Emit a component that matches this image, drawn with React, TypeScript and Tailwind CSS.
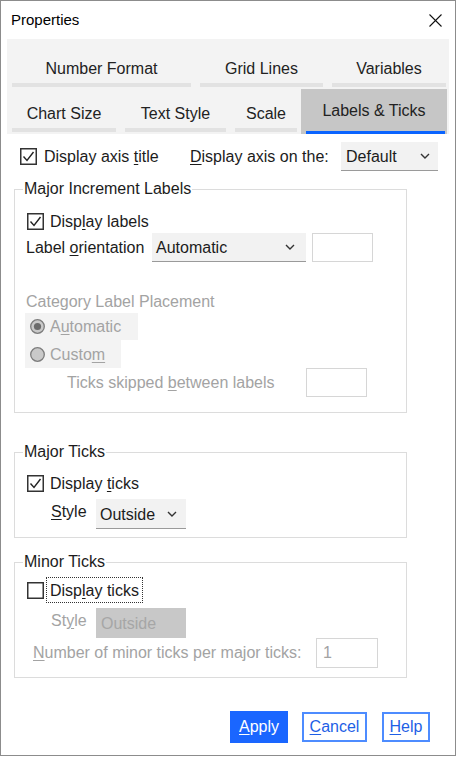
import type { ReactNode } from 'react'

const font = { fontFamily: '"Liberation Sans", Arial, sans-serif' }

function CheckBox({ checked }: { checked: boolean }) {
  return (
    <svg width="17" height="17" viewBox="0 0 17 17" className="shrink-0">
      <rect x="0.75" y="0.75" width="15.5" height="15.5" fill="white" stroke="#333" strokeWidth="1.5" />
      {checked && <polyline points="3.5,8.5 7,12.5 13.5,4" fill="none" stroke="#222" strokeWidth="1.4" />}
    </svg>
  )
}

function Radio({ selected }: { selected: boolean }) {
  return (
    <svg width="15" height="15" viewBox="0 0 15 15" className="shrink-0">
      <circle cx="7.5" cy="7.5" r="6.8" fill="#c9c9c9" stroke="#7c7c7c" strokeWidth="1.3" />
      {selected && <circle cx="7.5" cy="7.5" r="3.6" fill="#6b6b6b" />}
    </svg>
  )
}

function Chevron({ color = '#333' }: { color?: string }) {
  return (
    <svg width="10" height="6" viewBox="0 0 10 6" className="shrink-0">
      <polyline points="1,1 5,5 9,1" fill="none" stroke={color} strokeWidth="1.4" />
    </svg>
  )
}

function Tab({ label, width, tall }: { label: string; width: string; tall?: boolean }) {
  return (
    <div className={`flex flex-col ${width}`}>
      <div className={`h-[18px] leading-[18px] text-center text-[16px] text-[#222] ${tall ? 'mt-[16px]' : 'mt-[12px]'}`}>{label}</div>
      <div className={`h-[4px] bg-[#e2e2e2] ${tall ? 'mt-[5px]' : 'mt-[5px]'}`} />
    </div>
  )
}

function Group({ title, className, children }: { title: string; className: string; children: ReactNode }) {
  return (
    <fieldset className={`ml-[13px] w-[393px] border border-[#dcdcdc] ${className}`}>
      <legend className="ml-[8px] px-[1px] h-[18px] leading-[18px] text-[16px] text-[#1c1c1c]">{title}</legend>
      {children}
    </fieldset>
  )
}

export default function App() {
  return (
    <div style={font} className="w-[456px] h-[756px] bg-white border border-[#8c8c8c] flex flex-col text-[16px] text-[#1c1c1c]">
      {/* title bar */}
      <div className="h-[37px] flex items-center justify-between pl-[10px] pr-[13px]">
        <span className="mt-[2px] text-[15px] text-black">Properties</span>
        <svg width="13" height="13" viewBox="0 0 13 13" className="mt-[2px]">
          <line x1="0.5" y1="0.5" x2="12.5" y2="12.5" stroke="#111" strokeWidth="1.1" />
          <line x1="12.5" y1="0.5" x2="0.5" y2="12.5" stroke="#111" strokeWidth="1.1" />
        </svg>
      </div>

      {/* tabs */}
      <div className="ml-[6px] mt-[1px] w-[442px] h-[95px] bg-[#f3f3f3] pt-[9px] pl-[5px]">
        <div className="flex gap-[9px]">
          <Tab label="Number Format" width="w-[179px]" />
          <Tab label="Grid Lines" width="w-[123px]" />
          <Tab label="Variables" width="w-[114px]" />
        </div>
        <div className="flex mt-[2px]">
          <Tab label="Chart Size" width="w-[104px]" tall />
          <div className="w-[9px]" />
          <Tab label="Text Style" width="w-[101px]" tall />
          <div className="w-[9px]" />
          <Tab label="Scale" width="w-[62px]" tall />
          <div className="w-[4px]" />
          <div className="w-[146px] h-[45px] bg-[#c6c6c6] flex flex-col">
            <div className="mt-[13px] h-[18px] leading-[18px] text-center text-[16px] text-[#222]">Labels &amp; Ticks</div>
            <div className="mt-auto ml-[5px] mr-[2px] h-[3px] bg-[#0a64ff]" />
          </div>
        </div>
      </div>

      {/* axis title row */}
      <div className="mt-[8px] h-[29px] flex items-center pl-[19px]">
        <CheckBox checked />
        <span className="ml-[7px] w-[146px] mt-[1px]">Display axis <u className="underline-offset-2">t</u>itle</span>
        <span className="w-[151px] mt-[1px]"><u className="underline-offset-2">D</u>isplay axis on the:</span>
        <div className="w-[97px] h-[29px] bg-[#f2f2f2] border-b border-[#9a9a9a] flex items-center justify-between pl-[5px] pr-[8px]">
          <span className="mt-[1px]">Default</span>
          <Chevron />
        </div>
      </div>

      {/* major increment labels */}
      <Group title="Major Increment Labels" className="mt-[9px] pb-[15px]">
        <div className="mt-[11px] h-[24px] flex items-center pl-[12px]">
          <CheckBox checked />
          <span className="ml-[6px] mt-[1px]">Disp<u className="underline-offset-2">l</u>ay labels</span>
        </div>
        <div className="h-[29px] flex items-center pl-[11px]">
          <span className="w-[126px] mt-[1px]">Label <u className="underline-offset-2">o</u>rientation</span>
          <div className="w-[154px] h-[29px] bg-[#f2f2f2] border-b border-[#9a9a9a] flex items-center justify-between pl-[4px] pr-[11px]">
            <span className="mt-[1px]">Automatic</span>
            <Chevron />
          </div>
          <div className="ml-[6px] w-[61px] h-[29px] bg-white border border-[#d6d6d6]" />
        </div>
        <div className="mt-[31px] h-[18px] leading-[18px] pl-[11px] text-[#a3a3a3]">Category Label Placement</div>
        <div className="mt-[2px] ml-[10px] w-[113px] h-[27px] bg-[#f3f3f3] flex items-center pl-[5px] text-[#a3a3a3]">
          <Radio selected />
          <span className="ml-[5px] mt-[1px]">A<u className="underline-offset-2">u</u>tomatic</span>
        </div>
        <div className="ml-[10px] w-[96px] h-[28px] bg-[#f3f3f3] flex items-center pl-[5px] text-[#a3a3a3]">
          <Radio selected={false} />
          <span className="ml-[5px] mt-[1px]">Custo<u className="underline-offset-2">m</u></span>
        </div>
        <div className="h-[29px] flex items-center pl-[52px] text-[#a3a3a3]">
          <span className="w-[239px]">Ticks skipped <u className="underline-offset-2">b</u>etween labels</span>
          <div className="w-[61px] h-[29px] bg-white border border-[#d6d6d6]" />
        </div>
      </Group>

      {/* major ticks */}
      <Group title="Major Ticks" className="mt-[30px] pb-[8px]">
        <div className="mt-[11px] h-[22px] flex items-center pl-[12px]">
          <CheckBox checked />
          <span className="ml-[6px] mt-[1px]">Display <u className="underline-offset-2">t</u>icks</span>
        </div>
        <div className="mt-[5px] h-[30px] flex items-center pl-[36px]">
          <span className="-mt-[4px] w-[45px]"><u className="underline-offset-2">S</u>tyle</span>
          <div className="w-[90px] h-[30px] bg-[#f2f2f2] border-b border-[#9a9a9a] flex items-center justify-between pl-[4px] pr-[9px]">
            <span className="mt-[2px]">Outside</span>
            <Chevron />
          </div>
        </div>
      </Group>

      {/* minor ticks */}
      <Group title="Minor Ticks" className="mt-[15px] pb-[9px]">
        <div className="mt-[6px] h-[26px] flex items-center pl-[12px]">
          <CheckBox checked={false} />
          <span className="ml-[2px] h-[26px] leading-[25px] px-[3px] border border-dotted border-[#333]">Disp<u className="underline-offset-2">l</u>ay ticks</span>
        </div>
        <div className="mt-[5px] h-[30px] flex items-center pl-[36px] text-[#a3a3a3]">
          <span className="-mt-[4px] w-[45px]">St<u className="underline-offset-2">y</u>le</span>
          <div className="w-[90px] h-[30px] bg-[#c8c8c8] flex items-center pl-[5px] text-[#a6a6a6]">
            <span className="mt-[2px]">Outside</span>
          </div>
        </div>
        <div className="h-[30px] flex items-center pl-[18px] text-[#a3a3a3]">
          <span className="w-[283px]"><u className="underline-offset-2">N</u>umber of minor ticks per major ticks:</span>
          <div className="w-[62px] h-[30px] bg-white border border-[#d6d6d6] flex items-center pl-[6px] text-[#a3a3a3]">1</div>
        </div>
      </Group>

      {/* buttons */}
      <div className="mt-[33px] flex items-center justify-end pr-[25px]">
        <div className="w-[58px] h-[32px] bg-[#1a66ff] text-white flex items-center justify-center"><u className="underline-offset-2">A</u>pply</div>
        <div className="ml-[14px] w-[65px] h-[30px] border-2 border-[#4d8cff] text-[#1e5fe6] flex items-center justify-center"><u className="underline-offset-2">C</u>ancel</div>
        <div className="ml-[15px] w-[48px] h-[30px] border-2 border-[#4d8cff] text-[#1e5fe6] flex items-center justify-center"><u className="underline-offset-2">H</u>elp</div>
      </div>
    </div>
  )
}
